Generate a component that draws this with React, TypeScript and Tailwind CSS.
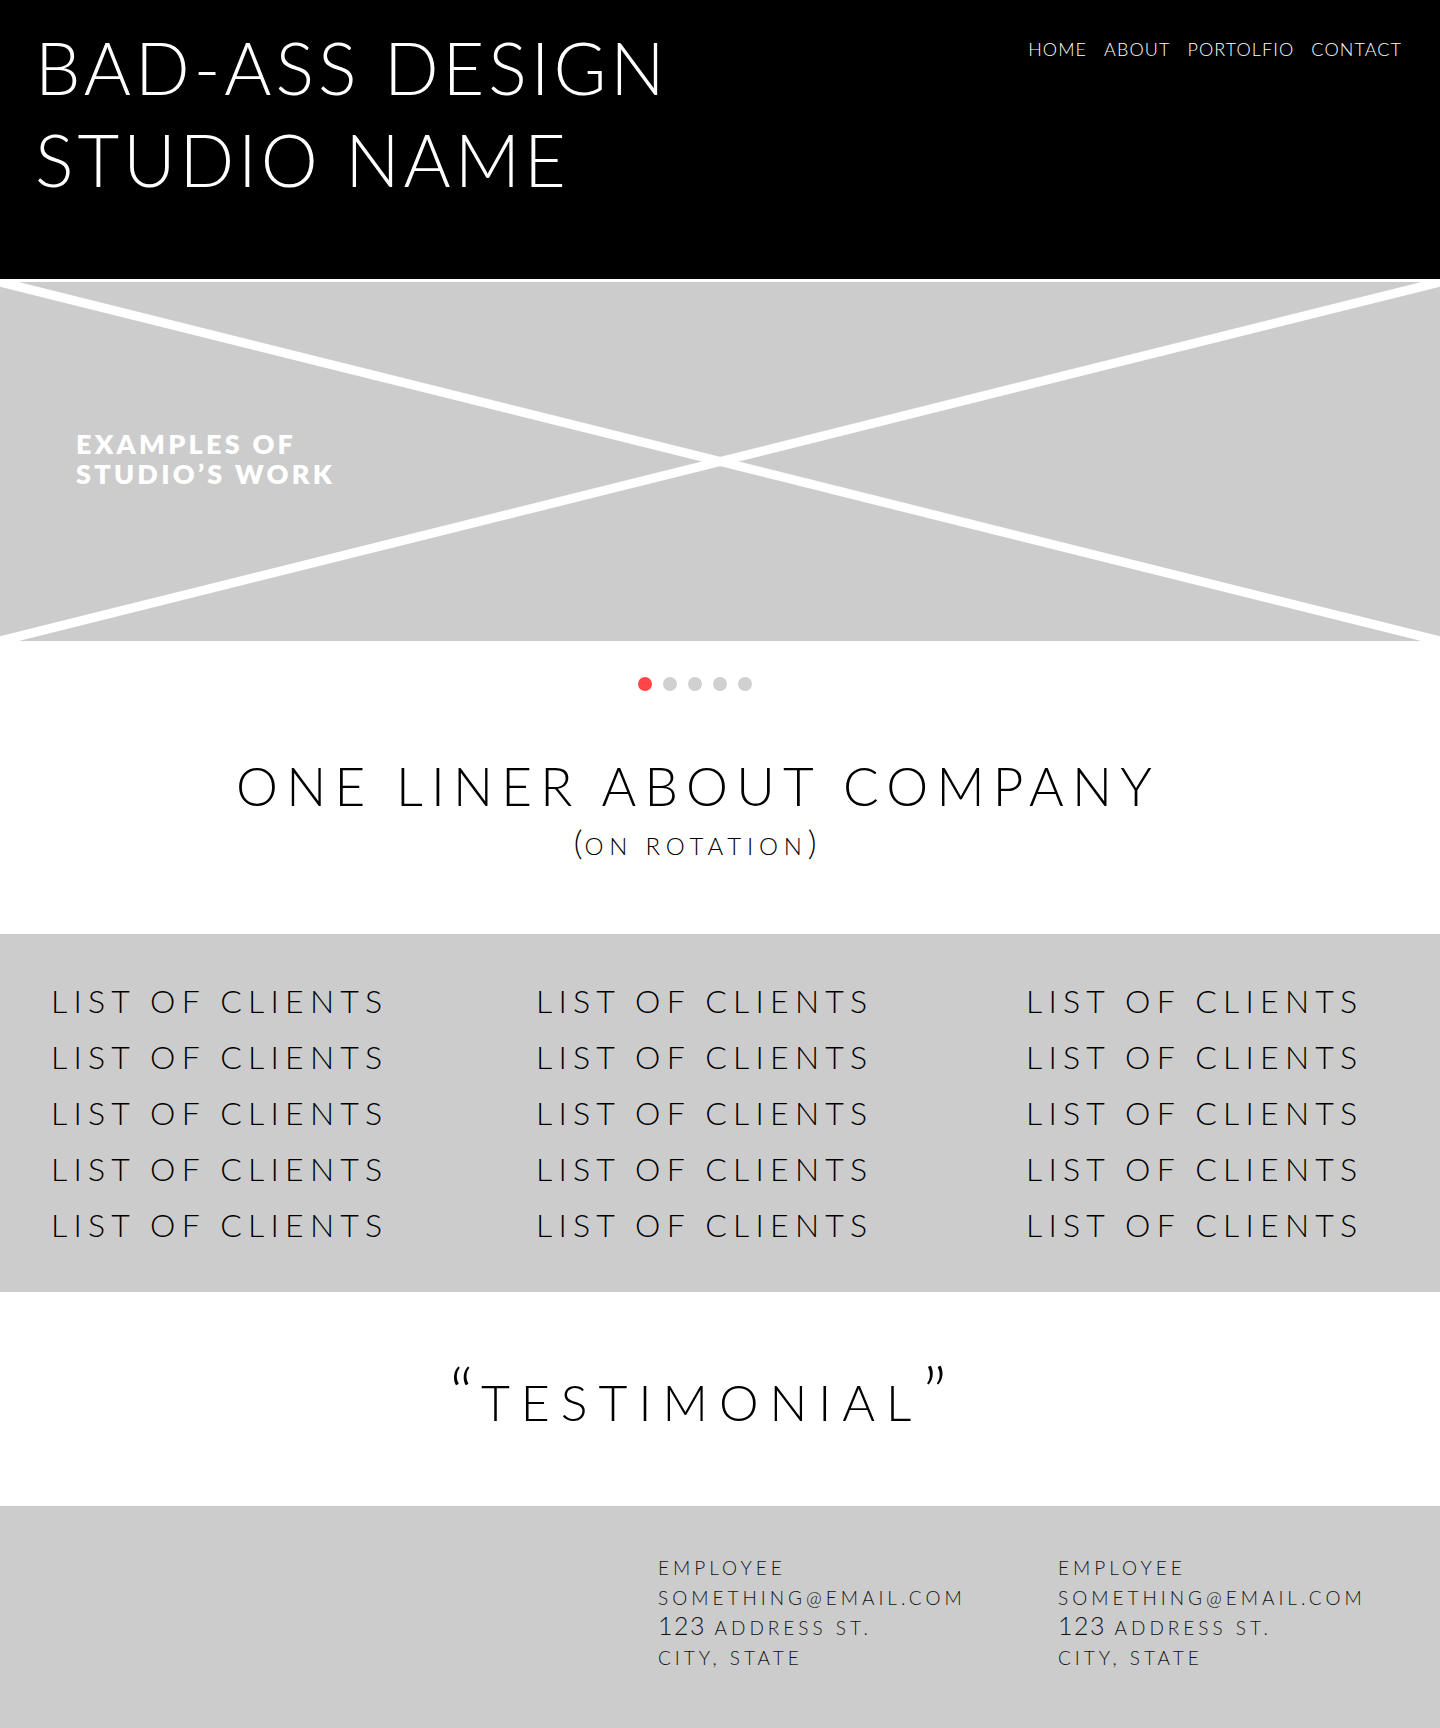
const clients = Array.from({ length: 5 }, () => 'LIST OF CLIENTS');

function ClientColumn() {
  return (
    <ul>
      {clients.map((c, i) => (
        <li key={i} className="text-[32px] leading-[56px] font-light tracking-[0.195em] whitespace-nowrap">
          {c}
        </li>
      ))}
    </ul>
  );
}

function Contact() {
  return (
    <div className="text-[19px] leading-[30px] font-light tracking-[0.21em] text-[#111]">
      <p>EMPLOYEE</p>
      <p>SOMETHING@EMAIL.COM</p>
      <p>
        <span className="text-[25px] leading-[0] tracking-[0.06em]">123</span> ADDRESS ST.
      </p>
      <p>CITY, STATE</p>
    </div>
  );
}

export default function App() {
  const nav = ['HOME', 'ABOUT', 'PORTOLFIO', 'CONTACT'];

  return (
    <div className="w-[1440px] min-h-[1728px] bg-white font-[Lato,sans-serif] text-black">
      <header className="h-[279px] bg-black text-white flex justify-between items-start pt-[21px] pl-[35px] pr-[38px]">
        <h1 className="text-[72px] leading-[92px] font-light tracking-[0.055em]">
          BAD-ASS DESIGN
          <br />
          STUDIO NAME
        </h1>
        <nav className="flex gap-[17px] pt-[19px] text-[18px] leading-[18px] font-light tracking-[0.06em] text-white">
          {nav.map((n) => (
            <a key={n} href="#">
              {n}
            </a>
          ))}
        </nav>
      </header>

      <section className="relative mt-[3px] h-[359px] bg-[#cccccc] overflow-hidden">
        <svg className="absolute inset-0" width="1440" height="359" viewBox="0 0 1440 359">
          <line x1="0" y1="0" x2="1440" y2="359" stroke="#fff" strokeWidth="9" />
          <line x1="0" y1="359" x2="1440" y2="0" stroke="#fff" strokeWidth="9" />
        </svg>
        <h2 className="relative pl-[76px] pt-[147px] text-[27px] leading-[30px] font-extrabold tracking-[0.12em] text-white">
          EXAMPLES OF
          <br />
          STUDIO’S WORK
        </h2>
      </section>

      <div className="flex justify-center gap-[11px] pt-[36px] pr-[50px]">
        <span className="w-[14px] h-[14px] rounded-full bg-[#ff4545]" />
        <span className="w-[14px] h-[14px] rounded-full bg-[#d0d0d0]" />
        <span className="w-[14px] h-[14px] rounded-full bg-[#d0d0d0]" />
        <span className="w-[14px] h-[14px] rounded-full bg-[#d0d0d0]" />
        <span className="w-[14px] h-[14px] rounded-full bg-[#d0d0d0]" />
      </div>

      <section className="flex flex-col items-center pt-[68px] pr-[44px] h-[243px]">
        <h3 className="text-[53px] leading-[53px] font-light tracking-[0.155em]">ONE LINER ABOUT COMPANY</h3>
        <p className="mt-[22px] text-[24px] leading-[24px] font-light tracking-[0.24em]">
          <span className="text-[34px] leading-[0] tracking-[0.06em]">(</span>ON ROTATION
          <span className="text-[34px] leading-[0]">)</span>
        </p>
      </section>

      <section className="bg-[#cccccc] h-[358px] pt-[39px] pl-[51px] grid grid-cols-[485px_490px_1fr]">
        <ClientColumn />
        <ClientColumn />
        <ClientColumn />
      </section>

      <section className="h-[214px] pt-[85px] pr-[44px] flex justify-center">
        <p className="text-[50px] leading-[50px] font-light tracking-[0.22em]">
          <span className="text-[72px] leading-[0] tracking-[0.1em]">“</span>TESTIMONIAL
          <span className="text-[72px] leading-[0] tracking-normal">”</span>
        </p>
      </section>

      <footer className="bg-[#cccccc] h-[222px] pt-[47px] pl-[658px] grid grid-cols-[400px_1fr]">
        <Contact />
        <Contact />
      </footer>
    </div>
  );
}
